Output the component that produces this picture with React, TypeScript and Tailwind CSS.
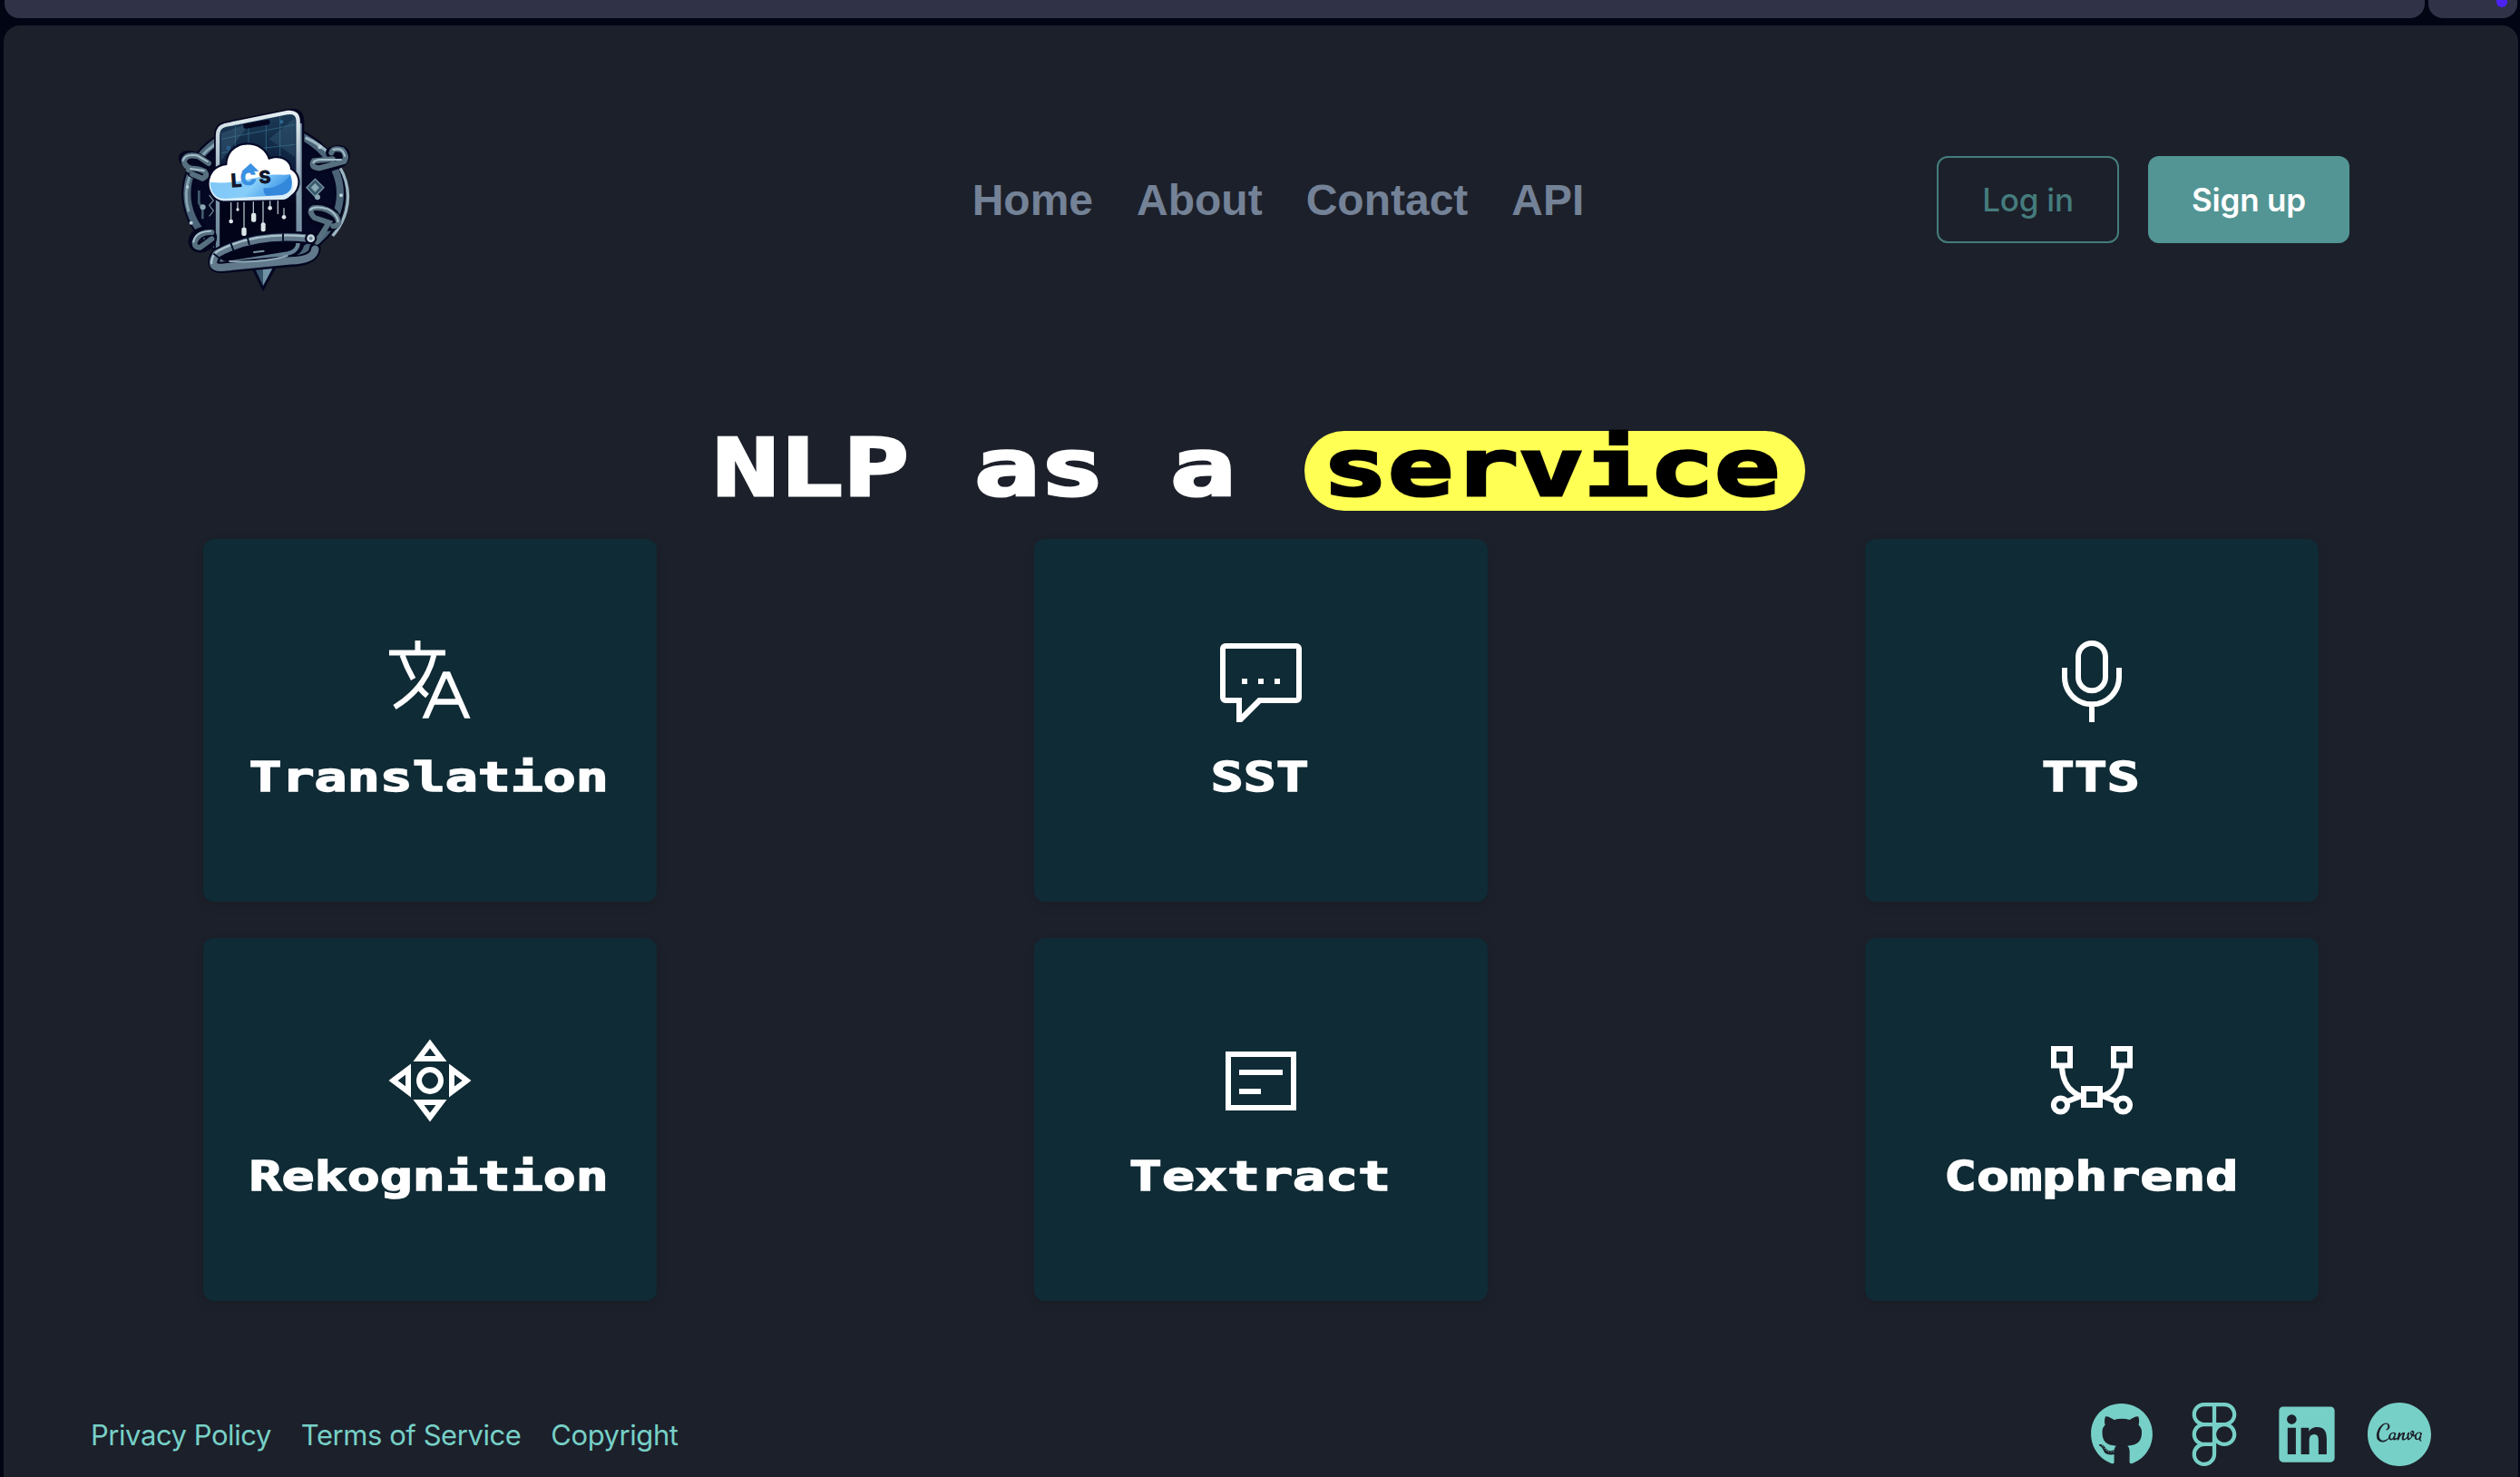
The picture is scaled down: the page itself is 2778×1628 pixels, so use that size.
import React from "react";
import { FaGithub, FaLinkedin } from "react-icons/fa";
import { SiCanva, SiFigma } from "react-icons/si";

function Logo() {
  return (
    <svg viewBox="30 45 600 630" className="h-[210px] w-[200px]" aria-label="LCS logo">
      <defs>
        <linearGradient id="screen" x1="0" y1="0" x2="0" y2="1">
          <stop offset="0" stopColor="#1b3a55" />
          <stop offset="0.45" stopColor="#0a1a38" />
          <stop offset="0.6" stopColor="#02041a" />
          <stop offset="1" stopColor="#02041a" />
        </linearGradient>
        <linearGradient id="frame" x1="0" y1="0" x2="0" y2="1">
          <stop offset="0" stopColor="#e4eef2" />
          <stop offset="0.5" stopColor="#8aa2b4" />
          <stop offset="1" stopColor="#5f7a8e" />
        </linearGradient>
        <linearGradient id="water" x1="0" y1="0" x2="1" y2="0.3">
          <stop offset="0" stopColor="#7fc6f7" />
          <stop offset="0.6" stopColor="#86cdf9" />
          <stop offset="1" stopColor="#3a93e6" />
        </linearGradient>
      </defs>
      {/* ring */}
      <ellipse cx="332" cy="340" rx="262" ry="228" fill="#050822" stroke="#040620" strokeWidth="18" />
      <ellipse cx="332" cy="340" rx="253" ry="218" fill="none" stroke="#4b6478" strokeWidth="24" />
      <path d="M84 400A250 215 0 0 1 170 178" fill="none" stroke="#86a3b2" strokeWidth="9" />
      <path d="M470 155A255 218 0 0 1 560 480" fill="none" stroke="#9bb5c2" strokeWidth="10" />
      <ellipse cx="332" cy="340" rx="234" ry="200" fill="none" stroke="#040620" strokeWidth="8" />
      <g fill="#b9ced6">
        <circle cx="518" cy="186" r="7" />
        <circle cx="588" cy="346" r="6" />
        <circle cx="92" cy="437" r="6" />
        <circle cx="80" cy="318" r="5" />
      </g>
      {/* side ornaments */}
      <path d="M152 345l14 18-14 16 14 18-14 18" fill="none" stroke="#67808f" strokeWidth="4" />
      <path d="M118 330v40l12 24v30" fill="none" stroke="#405a6c" strokeWidth="8" />
      <circle cx="131" cy="385" r="9" fill="#8ca9b5" />
      <path d="M502 292l29 28-29 30-28-30z" fill="#38586b" stroke="#7895a2" strokeWidth="4" />
      <path d="M502 306l14 14-14 15-14-15z" fill="#88a9b5" />
      <circle cx="510" cy="352" r="9" fill="#88a5b1" />
      {/* spike */}
      <path d="M286 575L379 575L330 664Z" fill="#050822" />
      <path d="M300 582L330 645V582Z" fill="#35536a" />
      <path d="M330 582V645L364 582Z" fill="#6f93a5" />
      {/* phone */}
      <path d="M168 146q0-36 32-43L416 60q48-6 50 40V500q0 40-44 50L210 590q-42 4-42-40Z" fill="#040620" />
      <path d="M454 108V488" stroke="#7f98aa" strokeWidth="8" />
      <path d="M180 146q0-26 24-32L412 72q34-4 34 30V500q0 30-34 38L214 570q-34 2-34-28Z" fill="url(#screen)" stroke="url(#frame)" strokeWidth="13" />
      <g stroke="#2f6482" strokeWidth="3" opacity="0.9">
        <path d="M238 112V230M282 104V200M340 92V200M386 84V240" />
        <path d="M192 160L436 112M192 205L436 178" />
      </g>
      <path d="M192 140L290 105L192 230Z" fill="#47718a" opacity="0.35" />
      <path d="M436 90L350 160L436 220Z" fill="#47718a" opacity="0.3" />
      <circle cx="216" cy="190" r="5" fill="none" stroke="#2e7fc0" strokeWidth="3" />
      <circle cx="391" cy="103" r="6" fill="#2b6a94" />
      <path d="M273 117L344 104" stroke="#040620" strokeWidth="17" strokeLinecap="round" />
      {/* drips */}
      <g stroke="#aebcc4" strokeWidth="4">
        <path d="M224 350V428M246 350V390M267 350V455M298 350V408M330 350V440M353 350V384M379 350V408M399 388V412" />
      </g>
      <g fill="#dde6e9">
        <circle cx="224" cy="432" r="7" />
        <circle cx="246" cy="393" r="5" />
        <rect x="259" y="452" width="16" height="28" rx="6" />
        <rect x="291" y="404" width="16" height="30" rx="6" />
        <rect x="323" y="436" width="15" height="30" rx="6" />
        <circle cx="353" cy="388" r="7" />
        <circle cx="399" cy="418" r="7" />
      </g>
      {/* cloud */}
      <path
        d="M196 364C132 350 138 250 211 246C212 160 330 158 348 228C390 212 420 236 420 260C462 282 450 345 398 356Z"
        fill="#ffffff"
        stroke="#050a28"
        strokeWidth="13"
        paintOrder="stroke"
      />
      <path d="M196 362C168 354 154 330 155 302C215 310 270 296 330 282C365 274 390 280 420 277C434 310 422 345 394 350Z" fill="url(#water)" />
      <path d="M332 322C370 326 402 304 419 280C429 312 419 342 392 350L348 352C336 345 330 336 332 322Z" fill="#3488dc" />
      <path d="M158 325C168 352 186 357 204 357L394 345C412 340 424 330 430 306C434 345 412 358 396 360L200 364C176 360 161 346 158 325Z" fill="#d8edf8" />
      <path d="M258 268L289 240L316 266Z" fill="#3b91e2" />
      <g fontFamily="Inter, sans-serif" fontWeight="900">
        <text x="225" y="320" fontSize="64" fill="#11172d" transform="rotate(-4 225 320)">L</text>
        <text x="256" y="314" fontSize="72" fill="#3b91e2" transform="rotate(-4 256 314)">C</text>
        <text x="317" y="308" fontSize="60" fill="#11172d" transform="rotate(-4 317 308)">S</text>
      </g>
      {/* chain links and lower band */}
      <g fill="none" strokeLinecap="round">
        <g stroke="#040620" strokeWidth="38">
          <ellipse cx="100" cy="232" rx="32" ry="12" transform="rotate(18 100 232)" />
          <path d="M96 268L136 284M122 236L150 250" />
          <path d="M500 250L560 240M556 205Q590 190 598 210Q600 235 560 245Q540 252 510 252" />
          <ellipse cx="130" cy="492" rx="30" ry="22" transform="rotate(-30 130 492)" />
          <ellipse cx="530" cy="418" rx="42" ry="24" transform="rotate(22 530 418)" />
          <path d="M490 488Q300 470 176 540Q150 588 200 584L420 564Q500 560 502 520" />
        </g>
        <g stroke="#57707f" strokeWidth="18">
          <path d="M150 240L118 218Q76 206 68 232Q72 252 92 256M84 262Q96 250 136 266Q150 282 130 290L96 276" />
          <path d="M556 205Q562 186 592 196Q610 216 598 234L515 256Q484 252 498 232L560 226" />
          <path d="M160 468Q118 466 104 500Q102 520 122 518L160 490" />
          <path d="M562 448Q590 446 572 414Q536 382 496 388Q478 398 500 420L548 436L508 500" />
        </g>
        <g stroke="#a5bfca" strokeWidth="6">
          <path d="M66 230Q70 208 112 214L146 234" />
          <path d="M90 258L134 264" />
          <path d="M562 195Q594 185 600 216M496 238Q500 226 530 228L588 228" />
          <path d="M100 500Q105 465 156 464" />
          <path d="M486 394Q500 378 546 392Q574 408 578 432" />
        </g>
        <path d="M478 488Q300 470 176 540Q146 590 200 584L420 562Q498 560 502 524" stroke="#61798a" strokeWidth="25" />
        <path d="M470 481Q300 466 180 530Q158 548 160 570" stroke="#a9c2cc" strokeWidth="7" />
        <path d="M220 564Q330 570 410 546" stroke="#8da8b5" strokeWidth="6" />
        <path d="M396 475V500M278 482L284 508M222 500L232 528M168 540L188 556" stroke="#06102a" strokeWidth="6" />
        <path d="M300 534L332 530" stroke="#7c97a5" strokeWidth="6" />
      </g>
      <circle cx="488" cy="488" r="20" fill="#040620" />
      <circle cx="488" cy="488" r="13" fill="#c9dbe0" />
      <circle cx="488" cy="488" r="6" fill="#6f8793" />
    </svg>
  );
}

const TranslateIcon = () => (
  <g>
    <path
      d="M31.5 0V13M0 13.5H62M14.5 16Q19 29 26.6 42.5M49.3 16C44 40 28 60 6 73.5M33 51.5Q37 57 42 61"
      fill="none"
      stroke="#fff"
      strokeWidth="6"
    />
    <path
      fill="#fff"
      fillRule="evenodd"
      d="M59.4 34.3H67L89.6 85.7H83L76.3 70.7H50L43.4 85.7H36.5ZM63.1 41.5L53 64.3H73.3Z"
    />
  </g>
);

const MessageIcon = () => (
  <g fill="#fff">
    <path
      fillRule="evenodd"
      d="M6 3H84a6 6 0 0 1 6 6V63a6 6 0 0 1-6 6H45L24 90H18V69H6a6 6 0 0 1-6-6V9a6 6 0 0 1 6-6ZM6 9V63H24V81L42 63H84V9Z"
    />
    <path d="M24 42h6v6h-6zM42 42h6v6h-6zM60 42h6v6h-6z" />
  </g>
);

const MicIcon = () => (
  <g fill="none" stroke="#fff" strokeWidth="6">
    <rect x="30" y="3" width="30" height="52.3" rx="15" />
    <path d="M15 30V40.3a30 30 0 0 0 60 0V30M45 70V90" />
  </g>
);

const MoveIcon = () => (
  <g fill="none" stroke="#fff" strokeWidth="6">
    <circle cx="45" cy="45" r="12" />
    <path d="M45 4.5L57.5 21H32.5ZM45 85.5L32.5 69H57.5ZM4.5 45L21 32.5V57.5ZM85.5 45L69 57.5V32.5Z" />
  </g>
);

const TextIcon = () => (
  <g fill="none" stroke="#fff" strokeWidth="6">
    <path d="M9 16H81V75H9ZM21 36H69M21 57H45" />
  </g>
);

const NodesIcon = () => (
  <g fill="none" stroke="#fff" strokeWidth="6">
    <path d="M3 10H21V28.5H3ZM69 10H87V28.5H69ZM36 54H54V72H36Z" />
    <path d="M12 31C13 46 20 59 36 63M78 31C77 46 70 59 54 63M18 68L36 61M72 68L54 61" />
    <circle cx="10.5" cy="72" r="7.6" />
    <circle cx="79.5" cy="72" r="7.6" />
  </g>
);

const services = [
  { name: "Translation", Icon: TranslateIcon },
  { name: "SST", Icon: MessageIcon },
  { name: "TTS", Icon: MicIcon },
  { name: "Rekognition", Icon: MoveIcon },
  { name: "Textract", Icon: TextIcon },
  { name: "Comphrend", Icon: NodesIcon },
];

export default function App() {
  return (
    <div className="flex h-[1628px] w-[2778px] flex-col overflow-hidden bg-[#010514] font-['Inter',sans-serif]">
      <div className="flex h-5 shrink-0 gap-1 pr-[3px] pl-[5px]">
        <div className="flex-1 rounded-b-[16px] bg-[#303348]" />
        <div className="flex w-[98px] justify-end rounded-b-[16px] bg-[#303348] pr-[11px]">
          <div className="h-2 w-3 rounded-b-full bg-[#4d22f5]" />
        </div>
      </div>

      <div className="mt-2 mr-0.5 ml-1 flex flex-1 flex-col rounded-t-[18px] bg-[#1c202a]">
        <header className="flex h-96 shrink-0 items-center justify-between pr-[186px] pl-[186px]">
          <div className="w-[493px]">
            <Logo />
          </div>
          <nav className="flex gap-12 pt-0.5 font-['Liberation_Sans',sans-serif] text-[48px] leading-none font-bold text-[#748297]">
            <a>Home</a>
            <a>About</a>
            <a>Contact</a>
            <a>API</a>
          </nav>
          <div className="flex gap-8 text-[35px] font-semibold tracking-[-0.2px] whitespace-nowrap">
            <button className="h-24 w-[201px] rounded-xl border-2 border-[#457c7d] font-medium text-[#457c7d]">Log in</button>
            <button className="h-24 w-[222px] rounded-xl bg-[#529594] text-white">Sign up</button>
          </div>
        </header>

        <main className="flex flex-1 flex-col items-center">
          <h1 className="mt-[63px] flex h-[88px] w-[1200px] font-['DejaVu_Sans_Mono',monospace] text-[87px] leading-[82px] font-bold whitespace-pre text-white">
            <span className="w-[644px]">
              <span className="-ml-1 inline-block origin-left scale-x-[1.3747] [-webkit-text-stroke:3px_currentColor]">NLP as a </span>
            </span>
            <span className="ml-1 h-[88px] w-[552px] rounded-full bg-[#ffff54] pl-5 text-black">
              <span className="inline-block origin-left scale-x-[1.3747] [-webkit-text-stroke:3px_currentColor]">service</span>
            </span>
          </h1>

          <div className="mt-[31px] grid w-[2332px] grid-cols-[repeat(3,500px)] justify-between gap-y-10">
            {services.map(({ name, Icon }) => (
              <div
                key={name}
                className="flex h-[400px] flex-col items-center rounded-xl bg-[#0f2b35] pt-28 shadow-[0_4px_12px_rgba(0,0,0,0.1)]"
              >
                <svg viewBox="0 0 90 90" className="size-[90px] shrink-0 overflow-visible">
                  <Icon />
                </svg>
                <div className="mt-[31px] mr-0.5 scale-x-[1.36] font-['DejaVu_Sans_Mono',monospace] text-[44px] leading-[60px] font-bold whitespace-nowrap text-white [-webkit-text-stroke:1.5px_currentColor]">
                  {name}
                </div>
              </div>
            ))}
          </div>
        </main>

        <footer className="flex h-[94px] shrink-0 items-center justify-between pr-24 pl-24 text-[#77d0c7]">
          <div className="flex gap-[33px] text-[31px] leading-none tracking-[-0.45px]">
            <a>Privacy Policy</a>
            <a>Terms of Service</a>
            <a>Copyright</a>
          </div>
          <div className="flex gap-8 text-[70px]">
            <FaGithub />
            <SiFigma />
            <FaLinkedin />
            <SiCanva />
          </div>
        </footer>
      </div>
    </div>
  );
}
